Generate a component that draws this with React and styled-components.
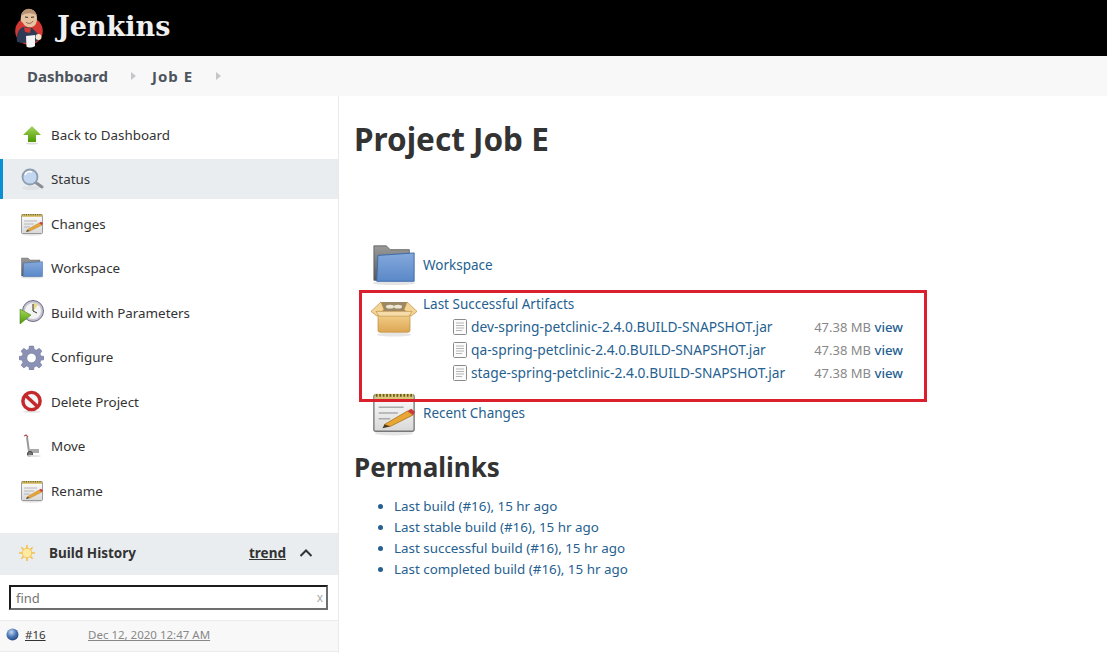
import React from "react";
import styled, { createGlobalStyle } from "styled-components";

const Global = createGlobalStyle`
  html, body { margin: 0; padding: 0; background: #fff; }
  body { font-family: "Noto Sans", "Open Sans", sans-serif; color: #333; font-size: 13px; overflow: hidden; }
  * { box-sizing: border-box; }
`;

const Page = styled.div`position: relative; width: 1107px; height: 653px; overflow: hidden;`;
const Header = styled.header`height: 56px; background: #000; display: flex; align-items: center; padding-left: 14px; gap: 10px;`;
const Brand = styled.span`font-family: "DejaVu Serif", serif; font-weight: 700; font-size: 27px; color: #f0f0f0; position: relative; top: -2px; left: 1px;`;
const Crumbs = styled.nav`height: 40px; background: #f8f8f8; display: flex; align-items: center; padding-left: 27px; font-size: 15px; font-weight: 700; color: #4d545d;`;
const CrumbWide = styled.span`letter-spacing: 1px;`;
const Caret = styled.span`width: 0; height: 0; border-left: 5px solid #c4c6c9; border-top: 4px solid transparent; border-bottom: 4px solid transparent; margin: ${p => p.$m};`;
const Body = styled.div`display: flex; height: 557px;`;
const Side = styled.aside`width: 339px; flex: none; border-right: 1px solid #eaeaea; padding-top: 18.5px;`;
const Tasks = styled.div`display: flex; flex-direction: column; gap: 4.5px;`;
const Task = styled.div`height: 40px; display: flex; align-items: center; gap: 7px; padding-left: ${p => p.$active ? "16px" : "19px"}; font-size: 13.4px; color: #333;
  ${p => p.$active && "background:#e9edf0;border-left:3px solid #0b8fd4;"}`;
const IconBox = styled.span`width: 25px; height: 25px; display: flex; align-items: center; justify-content: center; flex: none;`;
const HistoryHead = styled.div`margin-top: 22px; height: 42px; background: #e9edf0; display: flex; align-items: center; padding: 0 0 2px 19px; font-size: 13.5px; font-weight: 700; color: #333;`;
const HistoryTitle = styled.span`margin-left: 14px; flex: 1;`;
const Trend = styled.span`text-decoration: underline; color: #333; margin-right: 13px;`;
const Chevron = styled.svg`width: 14px; height: 9px; margin-right: 25px;`;
const SearchWrap = styled.div`padding: 10.5px 10px 10px 9px;`;
const Search = styled.div`height: 25px; border: 2px solid; border-color: #1c1c1c #6e6e6e #6e6e6e #1c1c1c; display: flex; align-items: center; justify-content: space-between; padding: 0 3px 0 5px; font-size: 13px; color: #757575;`;
const Clear = styled.span`color: #aaa; font-size: 12px;`;
const BuildRow = styled.div`height: 32px; background: #f8f8f8; border-top: 1px solid #ececec; border-bottom: 1px solid #ececec; display: flex; align-items: center; padding: 0 0 3px 6px; font-size: 11.5px; color: #333;`;
const BuildNum = styled.span`text-decoration: underline; margin-left: 6px; width: 63px;`;
const BuildDate = styled.span`text-decoration: underline; color: #888;`;
const Main = styled.main`flex: 1; padding: 22px 0 0 15px;`;
const Title = styled.h1`margin: 0; font-size: 31.5px; line-height: 42px; font-weight: 700; color: #333;`;
const Row = styled.div`display: flex; margin-top: ${p => p.$mt}; min-height: ${p => p.$h};`;
const BigIcon = styled.span`width: 69px; flex: none; display: flex; justify-content: flex-end; padding-right: ${p => p.$top ? "5px" : "6px"}; align-items: ${p => p.$top ? "flex-start" : "center"}; padding-top: ${p => p.$top ? "8px" : "0"};`;
const RowBody = styled.div`flex: 1; display: flex; align-items: ${p => p.$center ? "center" : "flex-start"}; flex-direction: ${p => p.$center ? "row" : "column"};`;
const Link = styled.span`color: #265f90; font-size: 13.5px; line-height: ${p => p.$lh || "23px"};`;
const Files = styled.div`display: grid; grid-template-columns: 18px 343px 57px 32px; margin-left: 30px; width: 450px; align-items: center;`;
const FileName = styled.span`color: #265f90; font-size: 13.75px; line-height: 23px; white-space: nowrap;`;
const Size = styled.span`color: #888; font-size: 13px; text-align: right; white-space: nowrap;`;
const View = styled.span`color: #265f90; font-size: 13.2px; font-weight: 500; text-align: right;`;
const Sub = styled.h2`margin: 11px 0 0; font-size: 26px; line-height: 40px; font-weight: 700; color: #333;`;
const Perma = styled.ul`margin: 9px 0 0; padding: 0 0 0 40px; font-size: 13.4px; line-height: 21px; color: #265f90; list-style: disc; li::marker { color: #265f90; }`;
const Marker = styled.div`position: absolute; left: 359px; top: 290px; width: 568px; height: 112px; border: 3px solid #da1f2d;`;

const Logo = () => (
  <svg width="32" height="40" viewBox="0 0 32 40">
    <circle cx="15" cy="23" r="13.8" fill="#d33833" />
    <path d="M7 9 C7 4 11 1 15 1 C20 1 23 5 23 10 C23 14 22 18 18 19 C14 20 10 18 9 15 C7 14 6 11 7 9Z" fill="#e6c3a0" />
    <path d="M7 8 C8 3 12 0 16 1 C19 1.500 22 4 23 8 C20 5 13 4 7 8Z" fill="#b89274" />
    <path d="M11 9 l3 .4 M17 9.300 l3 -.3" stroke="#3a2a20" strokeWidth="1" />
    <path d="M12 14 C14 16 17 16 19 13" stroke="#8a5a46" strokeWidth="1" fill="none" />
    <path d="M3 34 C2 27 4 21 9 19 L18 20 L24 26 L26 31 L21 34 L8 35Z" fill="#2e3b55" />
    <path d="M10 19.500 L17 20.500 L16 25 L11 24Z" fill="#d33833" />
    <path d="M12 28 L21 27 L21 38 C18 40 14 40 12.500 38.500Z" fill="#f4f4f4" />
    <circle cx="24.500" cy="29" r="3" fill="#f4e2cf" />
  </svg>
);

const Defs = () => (
  <svg width="0" height="0" style={{ position: "absolute" }}>
    <defs>
      <linearGradient id="gGreen" x1="0" y1="0" x2="0" y2="1"><stop offset="0" stopColor="#a5d65a" /><stop offset="1" stopColor="#4e9a06" /></linearGradient>
      <linearGradient id="gFolder" x1="0" y1="0" x2="0" y2="1"><stop offset="0" stopColor="#85a9dc" /><stop offset="1" stopColor="#5a88c8" /></linearGradient>
      <linearGradient id="gGrey" x1="0" y1="0" x2="0" y2="1"><stop offset="0" stopColor="#9a9a9a" /><stop offset="1" stopColor="#55585c" /></linearGradient>
      <linearGradient id="gBox" x1="0" y1="0" x2="0" y2="1"><stop offset="0" stopColor="#f3cf8a" /><stop offset="1" stopColor="#dca654" /></linearGradient>
      <radialGradient id="gBall" cx=".4" cy=".3" r=".8"><stop offset="0" stopColor="#c6d8ef" /><stop offset=".5" stopColor="#4a78b8" /><stop offset="1" stopColor="#1f3d70" /></radialGradient>
      <linearGradient id="gPaper" x1="0" y1="0" x2="0" y2="1"><stop offset="0" stopColor="#fdfdfd" /><stop offset="1" stopColor="#d8d8d8" /></linearGradient>
    </defs>
  </svg>
);

const UpArrow = () => (
  <svg width="20" height="20" viewBox="0 0 20 20"><path d="M10 1 L19 10 H14 V17 H6 V10 H1Z" fill="url(#gGreen)" /><ellipse cx="10" cy="18.500" rx="6" ry="1" fill="#ddd" /></svg>
);
const Magnifier = () => (
  <svg width="24" height="24" viewBox="0 0 24 24"><ellipse cx="11" cy="21" rx="9" ry="2" fill="#dfe2e5" /><path d="M15 15 L22 20" stroke="#8a8f94" strokeWidth="3" strokeLinecap="round" /><circle cx="10" cy="10" r="7.500" fill="#c3d8f0" stroke="#8d9cae" strokeWidth="1.800" /><path d="M5 8 C6 5 9 4 12 5" stroke="#fff" strokeWidth="1.500" fill="none" /></svg>
);
const Notepad = ({ s = 24 }) => (
  <svg width={s} height={s} viewBox="0 0 24 24">
    <ellipse cx="12" cy="22.500" rx="10" ry="1.200" fill="#e4e4e4" />
    <rect x="1.500" y="2.500" width="21" height="19" rx="1" fill="url(#gPaper)" stroke="#777" strokeWidth=".7" />
    <rect x="2" y="2" width="20" height="3" fill="#d9c67a" />
    <path d="M2.500 2.800h19" stroke="#6a5a1a" strokeWidth="1.400" strokeDasharray=".9 .9" />
    <path d="M4 9h13M4 12h10M4 15h6" stroke="#aaa" strokeWidth=".8" />
    <path d="M7 18 L19 11 L22 13 L10 19Z" fill="#e8a735" stroke="#a8701a" strokeWidth=".4" />
    <path d="M19 11 L22 13 L23 11.500 L21 9.800Z" fill="#c93a3a" />
    <path d="M7 18 L10 19 L6 20Z" fill="#4a3a20" />
  </svg>
);
const Folder = ({ s = 24 }) => (
  <svg width={s} height={s} viewBox="0 1 24 24">
    <ellipse cx="12" cy="22.500" rx="11" ry="1" fill="#e4e4e4" />
    <path d="M1.500 3 H8 L10 5 H20 V21 H1.500Z" fill="url(#gGrey)" stroke="#555" strokeWidth=".4" />
    <path d="M3 21.500 L3.600 8 L22.500 6.700 L22.500 21.500Z" fill="url(#gFolder)" stroke="#3d6aa8" strokeWidth=".5" />
  </svg>
);
const Clock = () => (
  <svg width="25" height="25" viewBox="0 0 25 25">
    <circle cx="14" cy="11" r="10.500" fill="#c5c4d2" stroke="#6c6a80" strokeWidth="1" />
    <circle cx="14" cy="11" r="8" fill="#f3f3f3" />
    <path d="M14 11 L14 3 A8 8 0 0 1 19 5Z" fill="#ecd78a" />
    <path d="M14 4 V11 L18 13" stroke="#333" strokeWidth="1" fill="none" />
    <path d="M1 9 L12 15 L1 24Z" fill="url(#gGreen)" stroke="#3e7a0a" strokeWidth=".5" />
  </svg>
);
const Gear = () => (
  <svg width="25" height="25" viewBox="0 0 24 24">
    <path fill="#8b90b5" stroke="#6d7296" strokeWidth=".5" fillRule="evenodd" d="M10 1 H14 L14.600 4.100 L16.700 5 L19.400 3.200 L22 5.800 L20.200 8.500 L21 10.600 L24 11 V14 L21 14.600 L20.200 16.700 L22 19.400 L19.400 22 L16.700 20.200 L14.600 21 L14 24 H10 L9.400 21 L7.300 20.200 L4.600 22 L2 19.400 L3.800 16.700 L3 14.600 L0 14 V11 L3 10.600 L3.800 8.500 L2 5.800 L4.600 3.200 L7.300 5 L9.400 4.100Z M12 8 A4.500 4.500 0 1 0 12.010 8Z" />
  </svg>
);
const NoEntry = () => (
  <svg width="23" height="23" viewBox="0 0 24 24">
    <ellipse cx="12" cy="22.500" rx="9" ry="1.200" fill="#e4e4e4" />
    <circle cx="12" cy="11.500" r="9" fill="#f5f5f5" stroke="#c4282d" strokeWidth="3.600" />
    <path d="M5.500 5.500 L18.500 17.500" stroke="#c4282d" strokeWidth="3.600" />
  </svg>
);
const Mover = () => (
  <svg width="22" height="24" viewBox="0 0 22 24">
    <path d="M3 2 L5 1 L7 3" stroke="#b55050" strokeWidth="1.200" fill="none" />
    <path d="M6 3 L8 18 L18 17" stroke="#999" strokeWidth="2" fill="none" />
    <rect x="7" y="15" width="11" height="4" fill="#aaa" />
    <circle cx="9" cy="20" r="2.600" fill="#777" stroke="#333" strokeWidth=".8" />
    <ellipse cx="13" cy="22" rx="7" ry="1" fill="#e4e4e4" />
  </svg>
);
const Sun = () => (
  <svg width="16" height="16" viewBox="0 0 16 16">
    <g stroke="#f5c04a" strokeWidth="1.600"><path d="M8 0V16M0 8H16M2.300 2.300L13.700 13.700M13.700 2.300L2.300 13.700" /></g>
    <circle cx="8" cy="8" r="4.800" fill="#fde9a0" stroke="#f0b83c" strokeWidth=".7" />
  </svg>
);
const Box = () => (
  <svg width="48" height="36" viewBox="0 2 48 38" preserveAspectRatio="none">
    <ellipse cx="24" cy="37.500" rx="17" ry="2" fill="#e6e6e6" />
    <path d="M8 16 H40 V33 Q40 35 38 35 H10 Q8 35 8 33Z" fill="url(#gBox)" stroke="#b98a3c" strokeWidth=".7" />
    <path d="M11 3 H37 L42 13 H6Z" fill="#9c8865" />
    <ellipse cx="20" cy="8" rx="4" ry="2" fill="#ece6d5" /><ellipse cx="28" cy="8" rx="4" ry="2" fill="#ece6d5" />
    <path d="M11 3 L1 13 L7 18 L14 11Z" fill="#f3d495" stroke="#b98a3c" strokeWidth=".7" />
    <path d="M37 3 L47 13 L41 18 L34 11Z" fill="#f3d495" stroke="#b98a3c" strokeWidth=".7" />
    <path d="M6 13 H42 L39 18 H9Z" fill="#f6dca8" stroke="#b98a3c" strokeWidth=".6" />
  </svg>
);
const FileIcon = () => (
  <svg width="15" height="16" viewBox="0 0 15 16">
    <rect x=".5" y=".5" width="13" height="15" rx="1" fill="#fbfbfb" stroke="#8a8a8a" />
    <path d="M3 4h8M3 6.500h8M3 9h8M3 11.500h6" stroke="#b5b5b5" strokeWidth="1" />
  </svg>
);

const tasks = [
  ["Back to Dashboard", <UpArrow />],
  ["Status", <Magnifier />, true],
  ["Changes", <Notepad />],
  ["Workspace", <Folder />],
  ["Build with Parameters", <Clock />],
  ["Configure", <Gear />],
  ["Delete Project", <NoEntry />],
  ["Move", <Mover />],
  ["Rename", <Notepad />],
];
const jars = ["dev", "qa", "stage"];
const links = ["Last build (#16), 15 hr ago", "Last stable build (#16), 15 hr ago", "Last successful build (#16), 15 hr ago", "Last completed build (#16), 15 hr ago"];

export default function App() {
  return (
    <Page>
      <Global />
      <Defs />
      <Header><Logo /><Brand>Jenkins</Brand></Header>
      <Crumbs>Dashboard<Caret $m="0 16px 0 23px" /><CrumbWide>Job E</CrumbWide><Caret $m="0 0 0 23px" /></Crumbs>
      <Body>
        <Side>
          <Tasks>
            {tasks.map(([label, icon, active]) => (
              <Task key={label} $active={active}><IconBox>{icon}</IconBox>{label}</Task>
            ))}
          </Tasks>
          <HistoryHead>
            <Sun />
            <HistoryTitle>Build History</HistoryTitle>
            <Trend>trend</Trend>
            <Chevron viewBox="0 0 14 9"><path d="M1.500 8 L7 2.500 L12.500 8" stroke="#333" strokeWidth="2" fill="none" /></Chevron>
          </HistoryHead>
          <SearchWrap><Search>find<Clear>x</Clear></Search></SearchWrap>
          <BuildRow>
            <svg width="13" height="13" viewBox="0 0 13 13"><circle cx="6.500" cy="6.500" r="6" fill="url(#gBall)" /></svg>
            <BuildNum>#16</BuildNum>
            <BuildDate>Dec 12, 2020 12:47 AM</BuildDate>
          </BuildRow>
        </Side>
        <Main>
          <Title>Project Job E</Title>
          <Row $mt="82px" $h="40px">
            <BigIcon><Folder s={46} /></BigIcon>
            <RowBody $center><Link>Workspace</Link></RowBody>
          </Row>
          <Row $mt="5px" $h="91px">
            <BigIcon $top><Box /></BigIcon>
            <RowBody>
              <Link $lh="22px">Last Successful Artifacts</Link>
              <Files>
                {jars.map(j => (
                  <React.Fragment key={j}>
                    <FileIcon />
                    <FileName>{j}-spring-petclinic-2.4.0.BUILD-SNAPSHOT.jar</FileName>
                    <Size>47.38 MB</Size>
                    <View>view</View>
                  </React.Fragment>
                ))}
              </Files>
            </RowBody>
          </Row>
          <Row $mt="6px" $h="40px">
            <BigIcon><Notepad s={46} /></BigIcon>
            <RowBody $center><Link>Recent Changes</Link></RowBody>
          </Row>
          <Sub>Permalinks</Sub>
          <Perma>{links.map(l => <li key={l}>{l}</li>)}</Perma>
        </Main>
      </Body>
      <Marker />
    </Page>
  );
}
